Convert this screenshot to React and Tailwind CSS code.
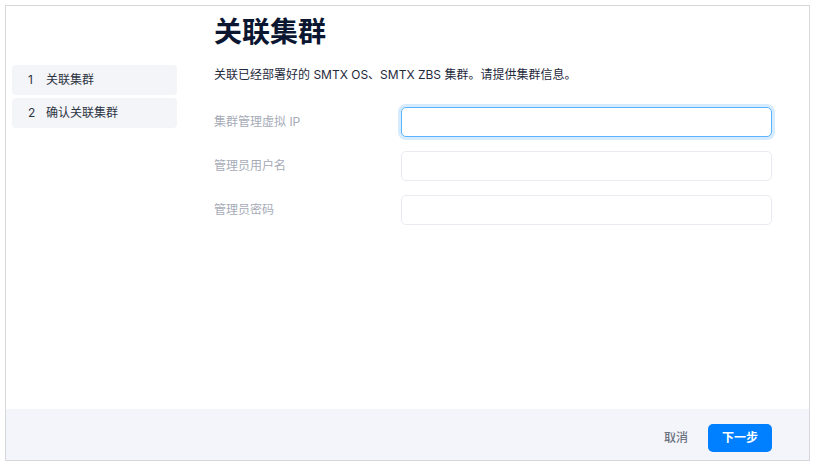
export default function App() {
  const font = { fontFamily: 'Inter, "Noto Sans CJK SC", sans-serif' };
  const steps = ["关联集群", "确认关联集群"];
  const fields = [
    { label: "集群管理虚拟 IP", focused: true },
    { label: "管理员用户名" },
    { label: "管理员密码" },
  ];
  return (
    <div className="w-[814px] h-[466px] bg-white p-[5px]" style={font}>
      <div className="w-[805px] h-[456px] border border-[#d6d8dc] flex flex-col">
        <div className="flex flex-1 min-h-0">
          {/* step list */}
          <div className="w-[202px] pl-[6px] pt-[59px] flex flex-col gap-[3px]">
            {steps.map((s, i) => (
              <div
                key={s}
                className="w-[165px] h-[30px] rounded-[4px] bg-[#f4f5f9] flex items-center pl-[16px] text-[12px] text-[#2c3443]"
              >
                <span className="w-[18px]">{i + 1}</span>
                <span>{s}</span>
              </div>
            ))}
          </div>
          {/* form */}
          <div className="flex-1 pt-[8px] pl-[6px]">
            <h1 className="text-[28px] leading-[36px] font-bold text-[#0b1631]">关联集群</h1>
            <p className="mt-[15px] text-[12px] leading-[20px] text-[#1f2a3c]">
              关联已经部署好的 SMTX OS、SMTX ZBS 集群。请提供集群信息。
            </p>
            <div className="mt-[22px] flex flex-col gap-[14px]">
              {fields.map((f) => (
                <div key={f.label} className="flex items-center">
                  <label className="w-[187px] text-[12px] text-[#a6abb7]">{f.label}</label>
                  <input
                    className={
                      "w-[371px] h-[30px] rounded-[5px] bg-white outline-none px-2 text-[12px] " +
                      (f.focused
                        ? "border border-[#5ab4ff] ring-[3px] ring-[#d7ebff]"
                        : "border border-[#e9ebf1]")
                    }
                  />
                </div>
              ))}
            </div>
          </div>
        </div>
        {/* footer */}
        <div className="h-[51px] bg-[#f4f5fa] flex items-center justify-end pr-[37px] pt-[7px] gap-[20px]">
          <button className="text-[12px] font-medium text-[#6c7280]">取消</button>
          <button className="w-[64px] h-[28px] rounded-[5px] bg-[#0080ff] text-white text-[12px] font-bold">
            下一步
          </button>
        </div>
      </div>
    </div>
  );
}
